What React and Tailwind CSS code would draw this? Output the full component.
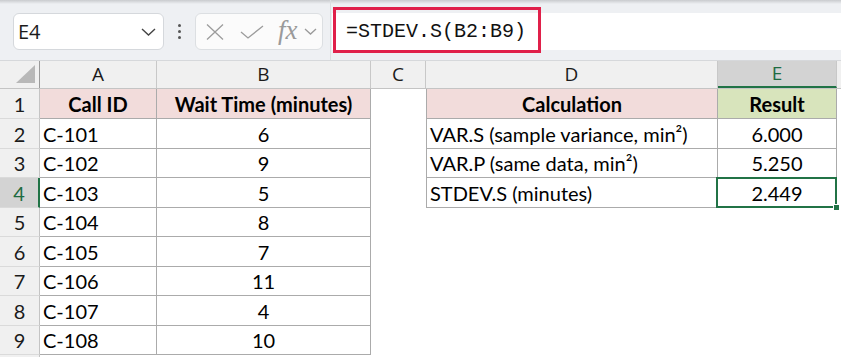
import React from 'react'

const cellFont = { fontFamily: 'Lato, "Liberation Sans", sans-serif' }

const rowHeights = ['h-[30px]', 'h-[30px]', 'h-[29px]', 'h-[30px]', 'h-[29px]', 'h-[30px]', 'h-[29px]', 'h-[30px]', 'h-[29px]', 'h-[30px]']

const calls = [
  ['C-101', '6'],
  ['C-102', '9'],
  ['C-103', '5'],
  ['C-104', '8'],
  ['C-105', '7'],
  ['C-106', '11'],
  ['C-107', '4'],
  ['C-108', '10'],
]

const stats = [
  ['VAR.S (sample variance, min²)', '6.000'],
  ['VAR.P (same data, min²)', '5.250'],
  ['STDEV.S (minutes)', '2.449'],
]

const Toolbar = () => (
  <div className="relative h-[61px] bg-[#eef0f3] border-b border-[#d6d8db]">
    <div className="h-[4px] bg-gradient-to-b from-[#c9cbce] to-[#eef0f3]" />
    <div className="flex items-start pl-[13px] pt-[9px]">
      {/* name box */}
      <div className="flex h-[37px] w-[151px] items-center justify-between rounded-[6px] border border-[#d5d8dc] bg-white pl-[4px] pr-[7px]">
        <span className="text-[20px] text-[#1b1b1b]" style={{ fontFamily: '"Open Sans", sans-serif' }}>E4</span>
        <svg width="15" height="8" viewBox="0 0 15 8">
          <path d="M1 1 L7.5 7 L14 1" fill="none" stroke="#444" strokeWidth="1.4" />
        </svg>
      </div>
      <div className="flex h-[37px] w-[31px] flex-col items-center justify-center gap-[3px]">
        <div className="h-[3px] w-[3px] rounded-full bg-[#555]" />
        <div className="h-[3px] w-[3px] rounded-full bg-[#555]" />
        <div className="h-[3px] w-[3px] rounded-full bg-[#555]" />
      </div>
      {/* function buttons */}
      <div className="flex h-[37px] w-[128px] items-center rounded-[6px] border border-[#dcdfe2] bg-[#fbfbfb] pl-[10px]">
        <svg width="18" height="16" viewBox="0 0 18 16">
          <path d="M1 0.5 L17 15.5 M17 0.5 L1 15.5" stroke="#9c9c9c" strokeWidth="1.3" fill="none" />
        </svg>
        <svg className="ml-[16px]" width="24" height="14" viewBox="0 0 24 14">
          <path d="M1 7 L8 13 L23 1" stroke="#9c9c9c" strokeWidth="1.3" fill="none" />
        </svg>
        <span className="ml-[14px] -mt-[3px] text-[27px] italic leading-none text-[#9a9a9a]" style={{ fontFamily: '"Liberation Serif", serif' }}>fx</span>
        <svg className="ml-[6px]" width="13" height="7" viewBox="0 0 13 7">
          <path d="M1 1 L6.5 6 L12 1" fill="none" stroke="#9a9a9a" strokeWidth="1.3" />
        </svg>
      </div>
      <div className="ml-[7px] h-[60px] w-px -mt-[13px] bg-[#dcdee1]" />
      {/* formula bar */}
      <div className="relative ml-[1px] flex h-[37px] flex-1 items-center bg-white pl-[14px]">
        <span className="text-[20px] text-[#111]" style={{ fontFamily: '"Liberation Mono", monospace' }}>=STDEV.S(B2:B9)</span>
        <div className="absolute -top-[6px] left-[1px] h-[46px] w-[208px] border-[3px] border-[#e0204a]" />
      </div>
    </div>
  </div>
)

const ColHeader = ({ w, label, active, last }) => (
  <div
    className={`flex ${w} items-center justify-center ${last ? '' : 'border-r border-[#c8c8c8]'} ${active ? 'bg-[#d3d3d3] text-[#1e6b41] border-b-2 border-b-[#217346]' : 'text-[#1b1b1b]'} text-[19px]`}
    style={{ fontFamily: '"Open Sans", sans-serif' }}
  >
    {label}
  </div>
)

const HeaderRow = () => (
  <div className="flex h-[28px] bg-[#f0f0f0] border-b border-[#c4c4c4]">
    <div className="relative w-[40px] border-r border-[#9a9a9a]">
      <svg className="absolute left-[16px] top-[4px]" width="20" height="19" viewBox="0 0 20 19">
        <polygon points="19,0 19,18 0,18" fill="#b8b8b8" />
      </svg>
    </div>
    <ColHeader w="w-[117px]" label="A" />
    <ColHeader w="w-[214px]" label="B" />
    <ColHeader w="w-[55px]" label="C" />
    <ColHeader w="w-[292px]" label="D" />
    <ColHeader w="w-[119px]" label="E" active />
    <div className="flex-1" />
  </div>
)

const RowHead = ({ n, active }) => (
  <div
    className={`flex w-[40px] items-center justify-center text-[20px] ${active ? 'bg-[#d3d3d3] text-[#1e6b41] border-r-2 border-r-[#217346]' : 'bg-[#f0f0f0] text-[#1b1b1b] border-r border-[#c4c4c4]'} border-b border-b-[#dadada]`}
    style={cellFont}
  >
    {n < 10 ? n : ''}
  </div>
)

const Grid = () => {
  const rows = []
  for (let i = 0; i < 10; i++) {
    const n = i + 1
    const isHead = i === 0
    const call = i >= 1 && i <= 8 ? calls[i - 1] : null
    const stat = i >= 1 && i <= 3 ? stats[i - 1] : null
    const inTableA = i <= 8
    const inTableD = i <= 3
    rows.push(
      <div key={n} className={`flex ${rowHeights[i]} text-[20px] text-black`} style={cellFont}>
        <RowHead n={n} active={n === 4} />
        <div className={`flex w-[117px] items-center ${isHead ? 'justify-center font-bold bg-[#f2dcdb]' : 'pl-[3px]'} ${inTableA ? 'border-r border-b border-[#ababab]' : ''}`}>
          {isHead ? 'Call ID' : call ? call[0] : ''}
        </div>
        <div className={`flex w-[214px] items-center justify-center ${isHead ? 'font-bold bg-[#f2dcdb]' : ''} ${inTableA ? 'border-r border-b border-[#ababab]' : ''}`}>
          {isHead ? 'Wait Time (minutes)' : call ? call[1] : ''}
        </div>
        <div className="w-[55px]" />
        <div className={`flex w-[292px] items-center ${isHead ? 'justify-center font-bold bg-[#f2dcdb]' : 'pl-[3px]'} ${inTableD ? 'border-l border-r border-b border-[#ababab]' : ''}`}>
          {isHead ? 'Calculation' : stat ? stat[0] : ''}
        </div>
        <div className={`relative flex w-[119px] items-center justify-center ${isHead ? 'font-bold bg-[#d8e4bc]' : ''} ${inTableD ? 'border-r border-b border-[#ababab]' : ''}`}>
          {isHead ? 'Result' : stat ? stat[1] : ''}
          {n === 4 && (
            <>
              <div className="absolute -left-[2px] -top-[1px] -right-[1px] -bottom-[1px] border-2 border-[#217346]" />
              <div className="absolute -right-[4px] -bottom-[4px] h-[7px] w-[7px] border border-white bg-[#217346]" />
            </>
          )}
        </div>
        <div className="flex-1" />
      </div>
    )
  }
  return <div>{rows}</div>
}

export default function App() {
  return (
    <div className="h-[357px] w-[841px] overflow-hidden bg-white">
      <Toolbar />
      <HeaderRow />
      <Grid />
    </div>
  )
}
